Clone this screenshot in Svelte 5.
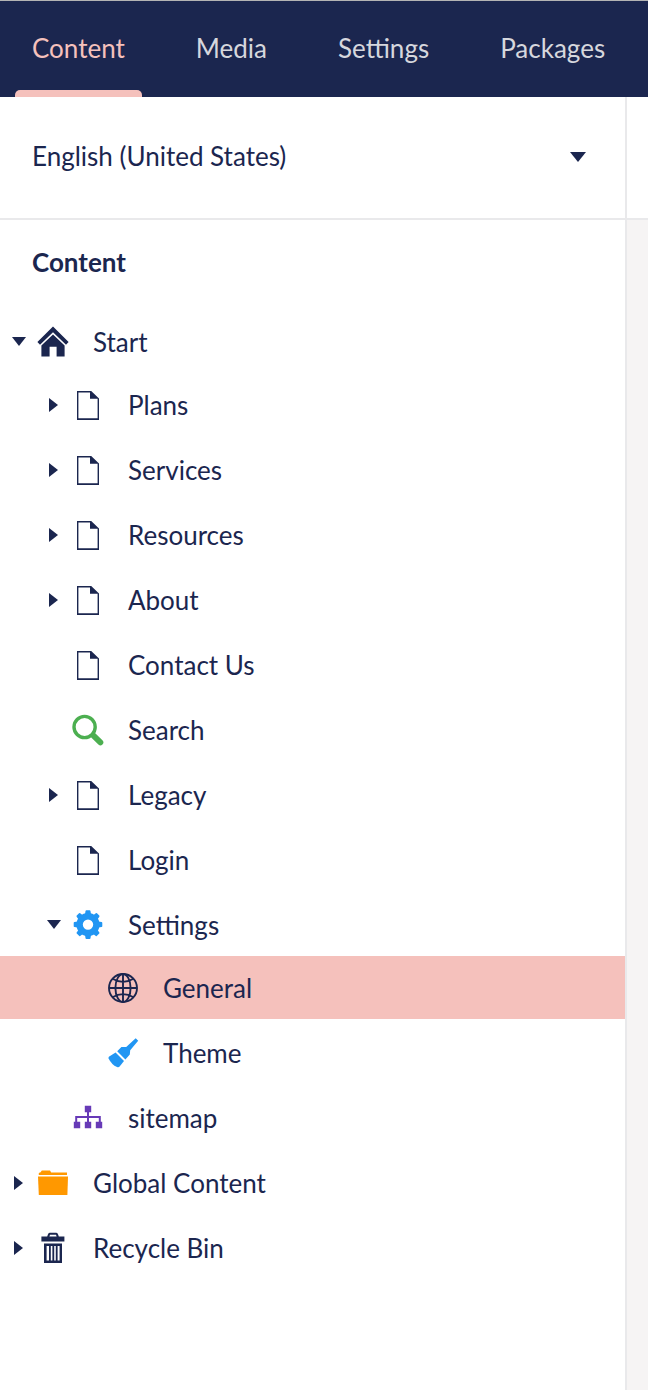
<script>
  const tabs = ["Content", "Media", "Settings", "Packages"];
  const languages = ["English (United States)"];

  let activeTab = $state("Content");
  let language = $state("English (United States)");
  let selected = $state("General");

  let tree = $state([
    {
      name: "Start",
      icon: "home",
      open: true,
      expandable: true,
      children: [
        { name: "Plans", icon: "document", expandable: true },
        { name: "Services", icon: "document", expandable: true },
        { name: "Resources", icon: "document", expandable: true },
        { name: "About", icon: "document", expandable: true },
        { name: "Contact Us", icon: "document" },
        { name: "Search", icon: "search" },
        { name: "Legacy", icon: "document", expandable: true },
        { name: "Login", icon: "document" },
        {
          name: "Settings",
          icon: "settings",
          open: true,
          expandable: true,
          children: [
            { name: "General", icon: "globe" },
            { name: "Theme", icon: "brush" },
          ],
        },
        { name: "sitemap", icon: "sitemap" },
      ],
    },
    { name: "Global Content", icon: "folder", expandable: true },
    { name: "Recycle Bin", icon: "trash", expandable: true },
  ]);
</script>

{#snippet icon(name)}
  <svg class="icon {name}" viewBox="0 0 32 32" aria-hidden="true">
    {#if name === "home"}
      <path d="M16 0.6 31.6 16 29 18.8 16 6.2 3 18.8 0.4 16Z" />
      <path d="M16 8.6 27.6 19.6V30.4H19.6V20.8H12.6V30.4H4.4V19.6Z" />
    {:else if name === "document"}
      <path
        fill-rule="evenodd"
        d="M5 2H19.2L27 9.6V31H5ZM6.4 3.4V29.2H25.6V9.8H18V3.4Z"
      />
    {:else if name === "search"}
      <circle cx="12.6" cy="13" r="10.6" fill="none" stroke="currentColor" stroke-width="3.4" />
      <path
        d="M21.5 21.6 28.4 28.4"
        fill="none"
        stroke="currentColor"
        stroke-width="5.8"
        stroke-linecap="round"
      />
    {:else if name === "settings"}
      <g fill="none" stroke="currentColor">
        <circle cx="16" cy="15.6" r="8.4" stroke-width="6.4" />
        {#each [0, 45, 90, 135, 180, 225, 270, 315] as angle}
          <path
            d="M13.9 5.4 14.4 2.2H17.6L18.1 5.4Z"
            fill="currentColor"
            stroke-width="1.8"
            stroke-linejoin="round"
            transform="rotate({angle} 16 15.6)"
          />
        {/each}
      </g>
    {:else if name === "globe"}
      <g fill="none" stroke="currentColor" stroke-width="1.9">
        <circle cx="16" cy="16" r="14" />
        <ellipse cx="16" cy="16" rx="7.6" ry="14" />
        <path d="M16 2V30M2 16H30M5.5 6.8Q16 13 26.5 6.8M5.5 25.2Q16 19 26.5 25.2" />
      </g>
    {:else if name === "brush"}
      <path
        d="M28.7 1.2 31.2 3.7 23.2 13.2 22.8 17.6 18.4 22.4 10.2 14.2 14.4 10H19.2Z"
      />
      <path d="M8.6 15.6 17 24 12.4 29.8Q11.6 30.6 10 30Q4.6 27.6 1.6 21.4Q1.2 20.4 2.2 19.6Z" />
    {:else if name === "sitemap"}
      <path
        d="M12.8 3.8H19.2V10.2H17V14H28.8V19.8H30.2V26.2H23.8V19.8H26.8V16H17V19.8H19.2V26.2H12.8V19.8H15V16H5.2V19.8H8.2V26.2H1.8V19.8H3.2V14H15V10.2H12.8Z"
      />
    {:else if name === "folder"}
      <path d="M1.8 8V6L3.6 5.2 4.8 3.4H13L14.2 5.6H30V8Z" />
      <path d="M1 9.6H31L30.4 28H1.8Z" />
    {:else if name === "trash"}
      <path
        fill-rule="evenodd"
        d="M4.4 4.6H10.2L11 2.2Q11.6 0.8 13 0.8H19Q20.4 0.8 21 2.2L21.8 4.6H27.4V9.4H4.4ZM12.4 4.6H19.6L19 2.8H13Z"
      />
      <path
        fill-rule="evenodd"
        d="M7 11.6H25V31H7ZM9.6 14V28.4H12V14ZM13.8 14V28.4H15.4V14ZM17.2 14V28.4H18.8V14ZM20.6 14V28.4H22.6V14Z"
      />
    {/if}
  </svg>
{/snippet}

{#snippet branch(nodes, depth)}
  <ul>
    {#each nodes as node}
      <li>
        <div
          class="row"
          class:selected={selected === node.name && depth > 0}
          style:--depth={depth}
        >
          {#if node.expandable}
            <button
              class="toggle"
              aria-label="Toggle {node.name}"
              aria-expanded={!!node.open}
              onclick={() => (node.open = !node.open)}
            >
              <svg viewBox="0 0 14 14" aria-hidden="true">
                {#if node.open}
                  <path d="M0 2H14L7 11Z" />
                {:else}
                  <path d="M2 0 11 7 2 14Z" />
                {/if}
              </svg>
            </button>
          {:else}
            <span class="toggle"></span>
          {/if}
          <a
            href="#{node.name.toLowerCase().replace(' ', '-')}"
            onclick={() => (selected = node.name)}
          >
            {@render icon(node.icon)}
            {node.name}
          </a>
        </div>
        {#if node.open && node.children}
          {@render branch(node.children, depth + 1)}
        {/if}
      </li>
    {/each}
  </ul>
{/snippet}

<div class="app">
  <header>
    <nav>
      {#each tabs as tab}
        <a
          href="#{tab.toLowerCase()}"
          class:active={activeTab === tab}
          onclick={() => (activeTab = tab)}>{tab}</a
        >
      {/each}
    </nav>
  </header>

  <div class="body">
    <aside>
      <div class="language">
        <select aria-label="Language" bind:value={language}>
          {#each languages as name}
            <option>{name}</option>
          {/each}
        </select>
        <svg viewBox="0 0 16 10" aria-hidden="true"><path d="M0 0H16L8 10Z" /></svg>
      </div>

      <h1>Content</h1>
      <div class="tree">
        {@render branch(tree, 0)}
      </div>
    </aside>

    <main>
      <div class="editor-header"></div>
    </main>
  </div>
</div>

<style>
  :global(body) {
    margin: 0;
  }

  .app {
    min-height: 100vh;
    display: flex;
    flex-direction: column;
    background: #fff;
    color: #1b264f;
    font-family: Lato, sans-serif;
    font-size: 26px;
    line-height: 32px;
  }

  a {
    color: inherit;
    text-decoration: none;
  }

  header {
    border-top: 1px solid #b4b4b4;
    background: #1b264f;
  }

  nav {
    display: flex;
    gap: 37px;
    padding-left: 15px;
  }

  nav a {
    position: relative;
    padding: 31px 17px 33px;
    color: #d6d7dd;
  }

  nav a.active {
    color: #f5c1bc;
  }

  nav a.active::after {
    content: "";
    position: absolute;
    inset: auto 0 0;
    height: 7px;
    border-radius: 5px 5px 0 0;
    background: #f5c1bc;
  }

  .body {
    flex: 1;
    display: flex;
  }

  aside {
    flex: 1;
    border-right: 2px solid #e9e9eb;
  }

  main {
    flex: 0 0 21px;
    background: #f6f4f4;
  }

  .editor-header,
  .language {
    box-sizing: border-box;
    height: 123px;
    border-bottom: 2px solid #e9e9eb;
    background: #fff;
  }

  .language {
    display: grid;
    align-items: center;
  }

  .language select,
  .language svg {
    grid-area: 1 / 1;
  }

  .language select {
    appearance: none;
    height: 100%;
    padding: 0 64px 4px 32px;
    border: 0;
    background: none;
    color: inherit;
    font: inherit;
  }

  .language svg {
    justify-self: end;
    width: 16px;
    height: 10px;
    margin: 0 39px 2px 0;
    fill: currentColor;
    pointer-events: none;
  }

  h1 {
    margin: 26px 32px 32px;
    font-size: 26px;
    font-weight: 700;
    line-height: 32px;
  }

  ul {
    display: flex;
    flex-direction: column;
    gap: 2px;
    margin: 0;
    padding: 0;
    list-style: none;
  }

  .row {
    display: flex;
    align-items: center;
    height: 63px;
    padding-left: calc(12px + 35px * var(--depth));
  }

  .row.selected {
    background: #f5c1bc;
  }

  .row a {
    flex: 1;
    display: flex;
    align-items: center;
    gap: 24px;
  }

  .toggle {
    width: 14px;
    height: 14px;
    margin-right: 11px;
    padding: 0;
    border: 0;
    background: none;
    color: inherit;
  }

  .toggle svg {
    display: block;
    fill: currentColor;
  }

  .icon {
    width: 32px;
    height: 32px;
    fill: currentColor;
  }

  .search {
    color: #4caf50;
  }

  .settings,
  .brush {
    color: #2196f3;
  }

  .sitemap {
    color: #673ab7;
  }

  .folder {
    color: #ff9800;
  }
</style>
